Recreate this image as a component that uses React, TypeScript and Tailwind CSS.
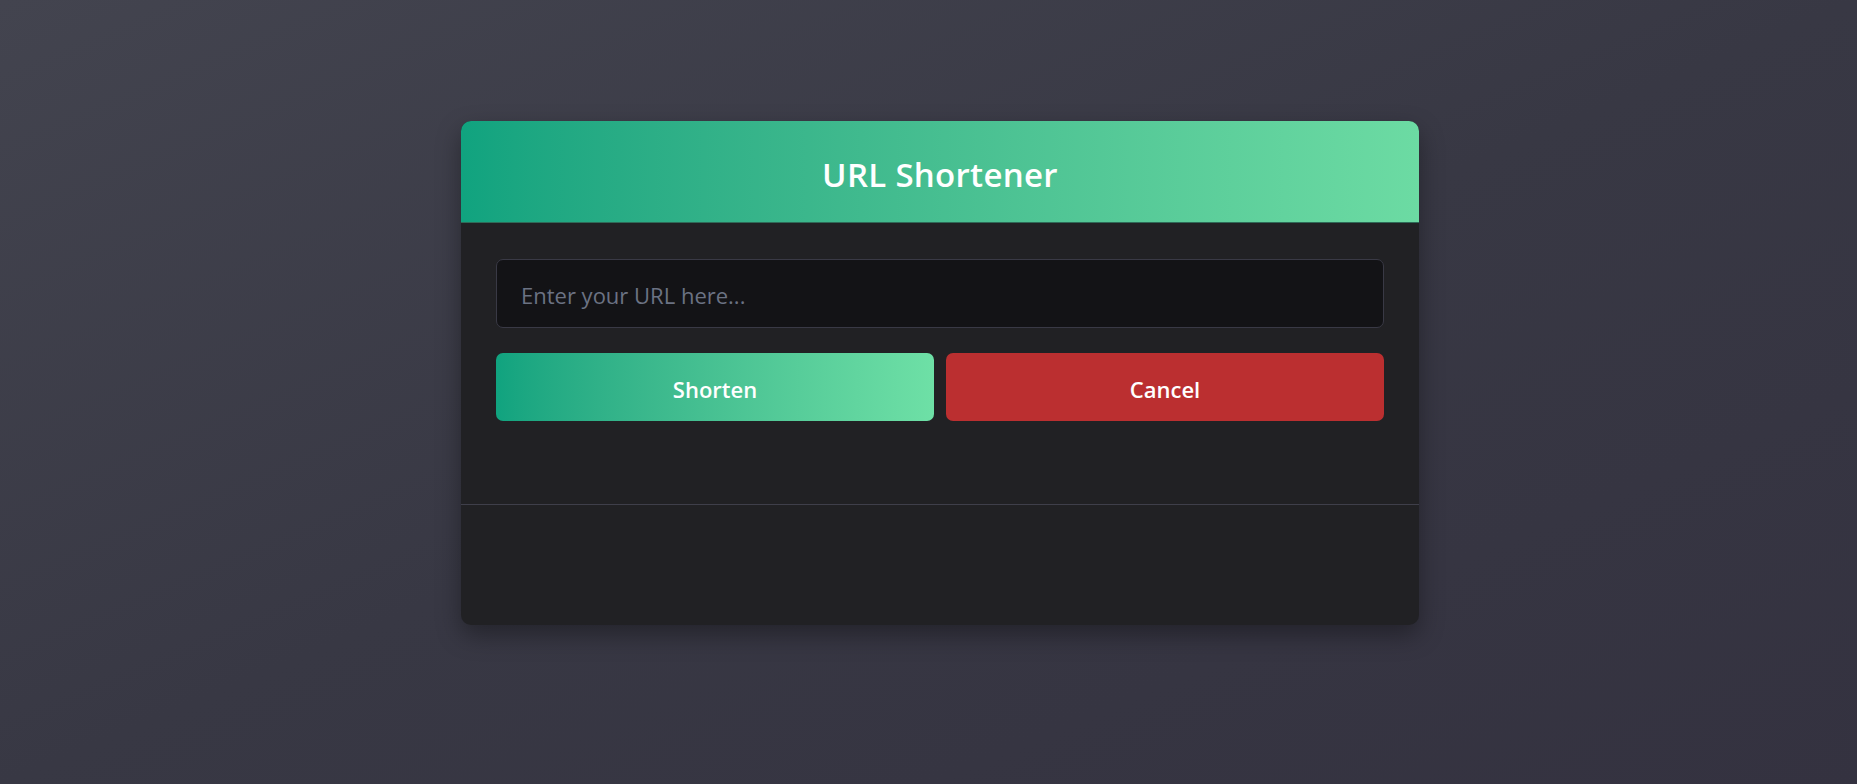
import { useState } from "react";

export default function App() {
  const [url, setUrl] = useState("");

  return (
    <div
      className="min-h-screen w-full bg-gradient-to-br from-[#43444f] via-[#383844] to-[#343240] pt-[121px] pl-[23px] flex justify-center"
      style={{ fontFamily: '"Open Sans", "Noto Sans", sans-serif' }}
    >
      <div className="w-[958px] h-[504px] rounded-[10px] bg-[#212124] shadow-[0_10px_24px_rgba(0,0,0,0.35)] flex flex-col overflow-hidden">
        <div className="h-[102px] shrink-0 bg-gradient-to-r from-[#10a37f] to-[#6cdba3] border-b border-[#2f6b58] flex items-center justify-center pt-[5px]">
          <h1 className="text-[33px] font-semibold text-white leading-none tracking-[0.3px]">URL Shortener</h1>
        </div>

        <div className="px-[35px] pt-[36px] h-[282px] shrink-0 border-b border-[#3f3f4a]">
          <input
            value={url}
            onChange={(e) => setUrl(e.target.value)}
            placeholder="Enter your URL here..."
            className="w-full h-[69px] rounded-[7px] bg-[#131316] border border-[#393945] px-[24px] pt-[2px] text-[22px] text-white placeholder:text-[#6b7283] outline-none"
          />
          <div className="mt-[25px] grid grid-cols-2 gap-[12px]">
            <button className="h-[68px] rounded-[7px] bg-gradient-to-r from-[#10a37f] to-[#6ee0a6] text-white text-[22px] font-semibold pt-[4px]">
              Shorten
            </button>
            <button className="h-[68px] rounded-[7px] bg-[#bb2f30] text-white text-[22px] font-semibold pt-[4px]">
              Cancel
            </button>
          </div>
        </div>

        <div className="flex-1" />
      </div>
    </div>
  );
}
